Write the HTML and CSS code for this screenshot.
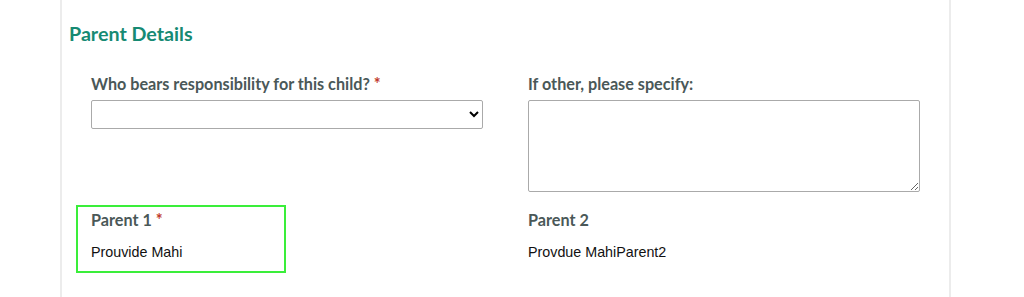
FILE: index.html
```html
<!DOCTYPE html>
<html lang="en">
<head>
    <meta charset="UTF-8">
    <title>Parent Details</title>
    <link rel="stylesheet" href="styles.css">
</head>
<body>
    <div class="card">
        <h2>Parent Details</h2>
        <div class="row">
            <div class="field">
                <label for="responsible">Who bears responsibility for this child? <span class="req">*</span></label>
                <select id="responsible"><option></option></select>
            </div>
            <div class="field">
                <label for="other">If other, please specify:</label>
                <textarea id="other"></textarea>
            </div>
        </div>
        <div class="row parents">
            <div class="parent highlight">
                <div class="parent-label">Parent 1 <span class="req">*</span></div>
                <div class="parent-name">Prouvide Mahi</div>
            </div>
            <div class="parent">
                <div class="parent-label">Parent 2</div>
                <div class="parent-name">Provdue MahiParent2</div>
            </div>
        </div>
    </div>
</body>
</html>
```

FILE: styles.css
```css
body {
    margin: 0;
    background: #fff;
    font-family: Lato, "Open Sans", sans-serif;
}
.card {
    margin-left: 60px;
    width: 891px;
    height: 297px;
    padding-left: 7px;
    border-left: 2px solid #ececec;
    border-right: 2px solid #ececec;
    box-sizing: border-box;
    overflow: hidden;
}
h2 {
    margin: 22px 0 0 0;
    font-size: 19.7px;
    line-height: 24px;
    font-weight: 700;
    color: #168a73;
}
.row {
    display: grid;
    grid-template-columns: 392px 392px;
    column-gap: 45px;
    padding-left: 22px;
}
.field {
    display: flex;
    flex-direction: column;
    margin-top: 28px;
}
label, .parent-label {
    font-size: 16.2px;
    line-height: 20px;
    font-weight: 700;
    color: #4a5858;
}
label {
    margin-bottom: 6px;
}
.req {
    color: #c0392b;
}
select {
    height: 29px;
    border: 1px solid #aaa;
    border-radius: 2px;
    background: #fff;
    font-size: 14px;
}
textarea {
    height: 92px;
    border: 1px solid #aaa;
    border-radius: 2px;
    box-sizing: border-box;
    resize: vertical;
}
.parents {
    margin-top: 13px;
}
.parent {
    margin-left: -15px;
    width: 210px;
    height: 68px;
    box-sizing: border-box;
    border: 2px solid transparent;
    padding: 3px 0 0 13px;
}
.parent.highlight {
    border-color: #3aee3a;
}
.parent-name {
    margin-top: 13px;
    font-family: "Liberation Sans", Arial, sans-serif;
    font-size: 14.3px;
    line-height: 18px;
    color: #111;
}
```
